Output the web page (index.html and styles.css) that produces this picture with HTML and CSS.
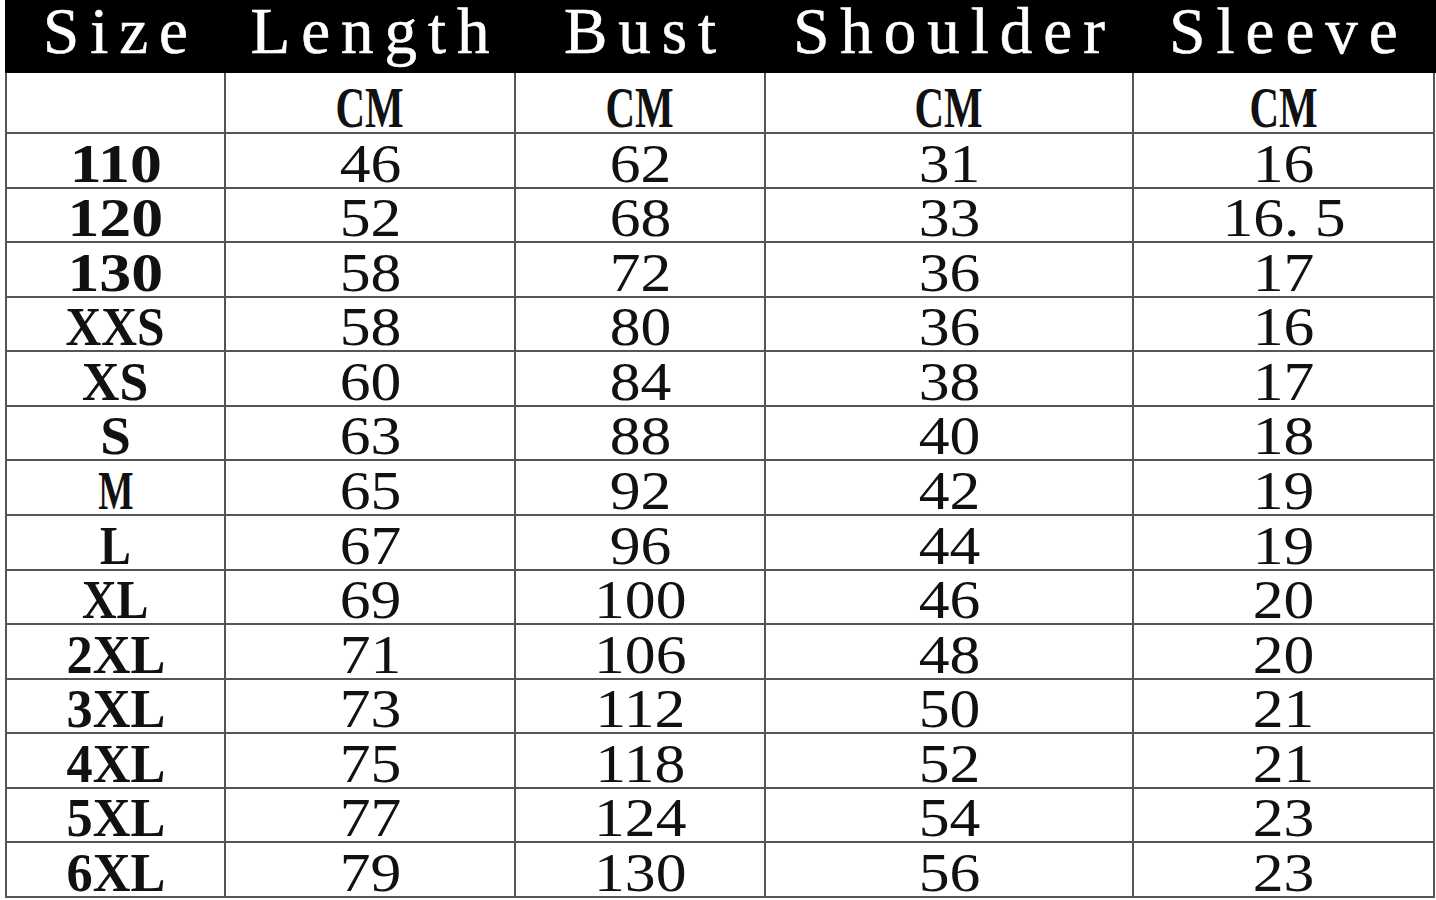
FILE: index.html
```html
<!DOCTYPE html>
<html lang="en">
<head>
<meta charset="utf-8">
<title>Size Chart</title>
<link rel="stylesheet" href="styles.css">
</head>
<body>
<div class="chart">
  <div class="head">
    <div class="hcell">Size</div>
    <div class="hcell">Length</div>
    <div class="hcell">Bust</div>
    <div class="hcell">Shoulder</div>
    <div class="hcell">Sleeve</div>
  </div>
  <div class="grid">
    <div class="cell unit"></div>
    <div class="cell unit"><span class="cm">CM</span></div>
    <div class="cell unit"><span class="cm">CM</span></div>
    <div class="cell unit"><span class="cm">CM</span></div>
    <div class="cell unit"><span class="cm">CM</span></div>

    <div class="cell"><span class="size sx-num">110</span></div>
    <div class="cell"><span class="val">46</span></div>
    <div class="cell"><span class="val">62</span></div>
    <div class="cell"><span class="val">31</span></div>
    <div class="cell"><span class="val">16</span></div>

    <div class="cell"><span class="size sx-num">120</span></div>
    <div class="cell"><span class="val">52</span></div>
    <div class="cell"><span class="val">68</span></div>
    <div class="cell"><span class="val">33</span></div>
    <div class="cell"><span class="val">16. 5</span></div>

    <div class="cell"><span class="size sx-num">130</span></div>
    <div class="cell"><span class="val">58</span></div>
    <div class="cell"><span class="val">72</span></div>
    <div class="cell"><span class="val">36</span></div>
    <div class="cell"><span class="val">17</span></div>

    <div class="cell"><span class="size sx-xxs">XXS</span></div>
    <div class="cell"><span class="val">58</span></div>
    <div class="cell"><span class="val">80</span></div>
    <div class="cell"><span class="val">36</span></div>
    <div class="cell"><span class="val">16</span></div>

    <div class="cell"><span class="size sx-xs">XS</span></div>
    <div class="cell"><span class="val">60</span></div>
    <div class="cell"><span class="val">84</span></div>
    <div class="cell"><span class="val">38</span></div>
    <div class="cell"><span class="val">17</span></div>

    <div class="cell"><span class="size sx-s">S</span></div>
    <div class="cell"><span class="val">63</span></div>
    <div class="cell"><span class="val">88</span></div>
    <div class="cell"><span class="val">40</span></div>
    <div class="cell"><span class="val">18</span></div>

    <div class="cell"><span class="size sx-m">M</span></div>
    <div class="cell"><span class="val">65</span></div>
    <div class="cell"><span class="val">92</span></div>
    <div class="cell"><span class="val">42</span></div>
    <div class="cell"><span class="val">19</span></div>

    <div class="cell"><span class="size sx-l">L</span></div>
    <div class="cell"><span class="val">67</span></div>
    <div class="cell"><span class="val">96</span></div>
    <div class="cell"><span class="val">44</span></div>
    <div class="cell"><span class="val">19</span></div>

    <div class="cell"><span class="size sx-xl">XL</span></div>
    <div class="cell"><span class="val">69</span></div>
    <div class="cell"><span class="val">100</span></div>
    <div class="cell"><span class="val">46</span></div>
    <div class="cell"><span class="val">20</span></div>

    <div class="cell"><span class="size sx-nxl">2XL</span></div>
    <div class="cell"><span class="val">71</span></div>
    <div class="cell"><span class="val">106</span></div>
    <div class="cell"><span class="val">48</span></div>
    <div class="cell"><span class="val">20</span></div>

    <div class="cell"><span class="size sx-nxl">3XL</span></div>
    <div class="cell"><span class="val">73</span></div>
    <div class="cell"><span class="val">112</span></div>
    <div class="cell"><span class="val">50</span></div>
    <div class="cell"><span class="val">21</span></div>

    <div class="cell"><span class="size sx-nxl">4XL</span></div>
    <div class="cell"><span class="val">75</span></div>
    <div class="cell"><span class="val">118</span></div>
    <div class="cell"><span class="val">52</span></div>
    <div class="cell"><span class="val">21</span></div>

    <div class="cell"><span class="size sx-nxl">5XL</span></div>
    <div class="cell"><span class="val">77</span></div>
    <div class="cell"><span class="val">124</span></div>
    <div class="cell"><span class="val">54</span></div>
    <div class="cell"><span class="val">23</span></div>

    <div class="cell"><span class="size sx-nxl">6XL</span></div>
    <div class="cell"><span class="val">79</span></div>
    <div class="cell"><span class="val">130</span></div>
    <div class="cell"><span class="val">56</span></div>
    <div class="cell"><span class="val">23</span></div>
  </div>
</div>
</body>
</html>
```

FILE: styles.css
```css
html, body {
  margin: 0;
  padding: 0;
  background: #ffffff;
}

.chart {
  margin-left: 5px;
  width: 1431px;
}

.head {
  display: grid;
  grid-template-columns: 217px 288px 248px 366px 299px;
  column-gap: 2px;
  padding: 0 3px 0 2px;
  height: 73px;
  background: #000000;
}

.hcell {
  text-align: center;
  color: #ffffff;
  font-family: "Liberation Serif", "Times New Roman", serif;
  font-size: 65px;
  line-height: 62px;
  letter-spacing: 11px;
  padding-left: 11px;
  -webkit-text-stroke: 0.6px #ffffff;
  white-space: nowrap;
}

.grid {
  display: grid;
  width: 1430px;
  box-sizing: border-box;
  grid-template-columns: 217px 288px 248px 366px 299px;
  grid-template-rows: 59px repeat(14, 52.57px);
  gap: 2px;
  padding: 0 2px 2px 2px;
  background: #555555;
}

.cell {
  background: #ffffff;
  display: flex;
  align-items: flex-end;
  justify-content: center;
  overflow: visible;
  color: #111111;
  font-family: "Liberation Serif", "Times New Roman", serif;
  font-size: 55px;
  line-height: 46px;
  white-space: nowrap;
}

.cell span {
  display: inline-block;
  transform-origin: 50% 50%;
}

.unit {
  line-height: 48px;
}

.cm {
  font-weight: bold;
  font-size: 56px;
  transform: scaleX(0.73);
}

.val {
  transform: scaleX(1.12);
}

.size {
  font-weight: bold;
}

.sx-num { transform: scaleX(1.16); }
.sx-xxs { transform: scaleX(0.9); }
.sx-xs  { transform: scaleX(0.94); }
.sx-s   { transform: scaleX(1.0); }
.sx-m   { transform: scaleX(0.68); }
.sx-l   { transform: scaleX(0.84); }
.sx-xl  { transform: scaleX(0.87); }
.sx-nxl { transform: scaleX(0.95); }
```
